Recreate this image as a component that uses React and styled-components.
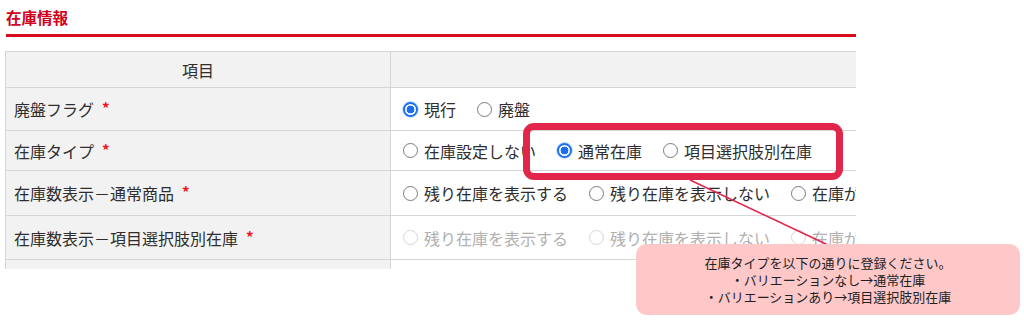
import styled, { createGlobalStyle, css } from 'styled-components';

const GlobalStyle = createGlobalStyle`
  body {
    margin: 0;
    background: #fff;
    font-family: "Noto Sans CJK JP", "Noto Sans", sans-serif;
  }
`;

const Page = styled.div`
  position: relative;
  width: 1024px;
  height: 321px;
  overflow: hidden;
  padding: 7px 0 0 6px;
  box-sizing: border-box;
`;

const Title = styled.h2`
  margin: 0;
  font-size: 15.5px;
  line-height: 20px;
  font-weight: 700;
  color: #d0021b;
`;

const Rule = styled.div`
  width: 850px;
  height: 3px;
  margin-top: 7px;
  background: #d70c18;
`;

const TableClip = styled.div`
  width: 851px;
  height: 218px;
  margin-top: 14px;
  margin-left: -1px;
  overflow: hidden;
`;

const Grid = styled.div`
  display: grid;
  grid-template-columns: 385px 600px;
  border-top: 1px solid #d6d6d6;
  border-left: 1px solid #d6d6d6;
`;

const Cell = styled.div`
  box-sizing: border-box;
  height: ${p => p.$h}px;
  display: flex;
  align-items: center;
  border-right: 1px solid #d6d6d6;
  border-bottom: 1px solid #d6d6d6;
  background: ${p => (p.$shade ? '#f2f2f2' : '#fff')};
  color: #2e2e2e;
  font-size: 16px;
  line-height: 20px;
  white-space: nowrap;
  padding-left: ${p => (p.$label ? 8 : 12)}px;
  ${p => p.$center && css`justify-content: center; padding-left: 0;`}
`;

const Required = styled.span`
  color: #f0141e;
  margin-left: 8px;
  font-size: 15px;
  font-weight: 700;
  position: relative;
  top: -1px;
`;

const Option = styled.label`
  display: inline-flex;
  align-items: center;
  gap: 6px;
  margin-right: 21px;
  color: ${p => (p.$disabled ? '#b0b0b0' : '#2e2e2e')};
`;

const RadioMark = styled.span`
  width: 15px;
  height: 15px;
  box-sizing: border-box;
  border-radius: 50%;
  flex: none;
  border: 1.5px solid ${p => (p.$disabled ? '#d6d6d6' : '#7a7a7a')};
  background: #fff;
  ${p => p.$checked && css`
    border: 2px solid #1a6ff0;
    background: radial-gradient(circle, #1a6ff0 0 3.6px, #fff 4.2px);
    box-shadow: 0 0 0 1px rgba(26, 111, 240, 0.25);
  `}
`;

const Highlight = styled.div`
  position: absolute;
  left: 523px;
  top: 123px;
  width: 320px;
  height: 57px;
  box-sizing: border-box;
  border: 7px solid #e2264b;
  border-radius: 11px;
`;

const Leader = styled.svg`
  position: absolute;
  left: 0;
  top: 0;
  pointer-events: none;
`;

const Bubble = styled.div`
  position: absolute;
  left: 636px;
  top: 244px;
  width: 384px;
  height: 71px;
  box-sizing: border-box;
  border-radius: 11px;
  background: #fec8c8;
  display: flex;
  flex-direction: column;
  align-items: center;
  justify-content: center;
  color: #222;
  font-size: 13px;
  line-height: 17px;
`;

const rows = [
  { label: '廃盤フラグ', h: 43, options: [['現行', true], ['廃盤']] },
  { label: '在庫タイプ', h: 40, options: [['在庫設定しない'], ['通常在庫', true], ['項目選択肢別在庫']] },
  { label: '在庫数表示－通常商品', h: 45, options: [['残り在庫を表示する'], ['残り在庫を表示しない'], ['在庫がない場合のみ表示']] },
  { label: '在庫数表示－項目選択肢別在庫', h: 44, disabled: true, options: [['残り在庫を表示する'], ['残り在庫を表示しない'], ['在庫がない場合のみ表示']] },
  { label: '', h: 44, options: [] },
];

const App = () => {
  return (
    <Page>
      <GlobalStyle />
      <Title>在庫情報</Title>
      <Rule />
      <TableClip>
        <Grid>
          <Cell $h={36} $shade $center>項目</Cell>
          <Cell $h={36} $shade />
          {rows.map((row, i) => (
            <>
              <Cell key={`l${i}`} $h={row.h} $shade $label>
                {row.label}
                {row.label && <Required>*</Required>}
              </Cell>
              <Cell key={`r${i}`} $h={row.h}>
                {row.options.map(([text, checked]) => (
                  <Option key={text} $disabled={row.disabled}>
                    <RadioMark $checked={checked} $disabled={row.disabled} />
                    {text}
                  </Option>
                ))}
              </Cell>
            </>
          ))}
        </Grid>
      </TableClip>
      <Highlight />
      <Leader width="1024" height="321">
        <line x1="690" y1="180" x2="828" y2="245" stroke="#e2264b" strokeWidth="1.5" />
      </Leader>
      <Bubble>
        <div>在庫タイプを以下の通りに登録ください。</div>
        <div>・バリエーションなし→通常在庫</div>
        <div>・バリエーションあり→項目選択肢別在庫</div>
      </Bubble>
    </Page>
  );
};

export default App;
